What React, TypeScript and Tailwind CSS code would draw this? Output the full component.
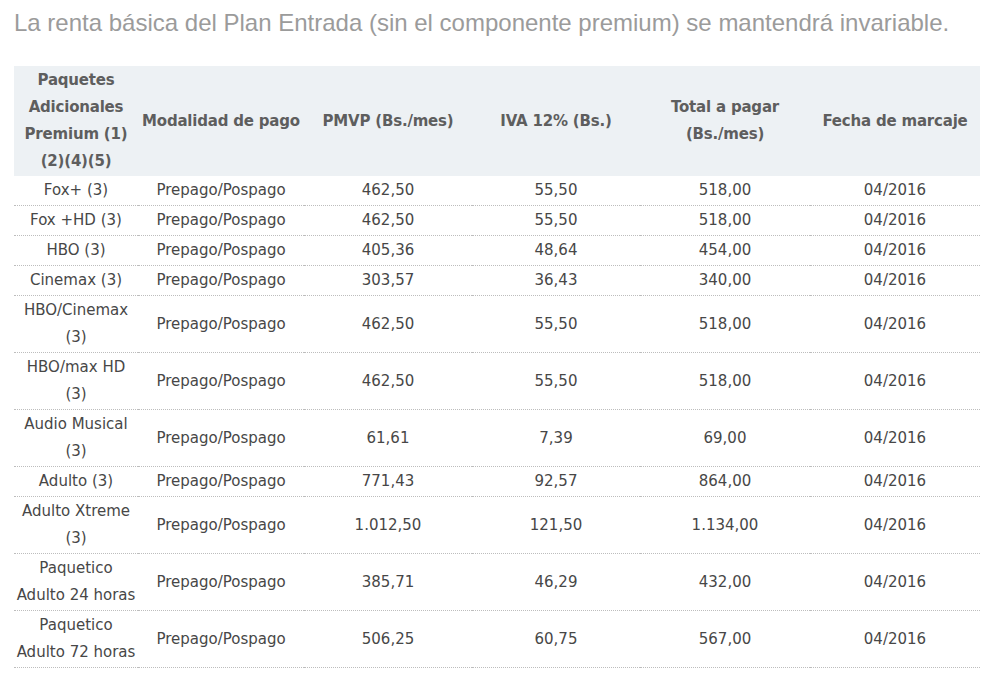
import React from 'react';

type Row = {
  name: React.ReactNode;
  pmvp: string;
  iva: string;
  total: string;
};

const rows: Row[] = [
  { name: 'Fox+ (3)', pmvp: '462,50', iva: '55,50', total: '518,00' },
  { name: 'Fox +HD (3)', pmvp: '462,50', iva: '55,50', total: '518,00' },
  { name: 'HBO (3)', pmvp: '405,36', iva: '48,64', total: '454,00' },
  { name: 'Cinemax (3)', pmvp: '303,57', iva: '36,43', total: '340,00' },
  { name: <>HBO/Cinemax<br />(3)</>, pmvp: '462,50', iva: '55,50', total: '518,00' },
  { name: <>HBO/max HD<br />(3)</>, pmvp: '462,50', iva: '55,50', total: '518,00' },
  { name: <>Audio Musical<br />(3)</>, pmvp: '61,61', iva: '7,39', total: '69,00' },
  { name: 'Adulto (3)', pmvp: '771,43', iva: '92,57', total: '864,00' },
  { name: <>Adulto Xtreme<br />(3)</>, pmvp: '1.012,50', iva: '121,50', total: '1.134,00' },
  { name: <>Paquetico<br />Adulto 24 horas</>, pmvp: '385,71', iva: '46,29', total: '432,00' },
  { name: <>Paquetico<br />Adulto 72 horas</>, pmvp: '506,25', iva: '60,75', total: '567,00' }
];

const App: React.FC = () => {
  const cell = 'px-0 py-px text-center align-middle border-b border-dotted border-[#bdbdbd]';

  return (
    <div className="min-h-screen bg-white px-[14px] pt-[6px]">
      <p
        className="text-[24px] leading-[34px] text-[#9b9b9b]"
        style={{ fontFamily: '"Liberation Sans", Arial, sans-serif' }}
      >
        La renta básica del Plan Entrada (sin el componente premium) se mantendrá invariable.
      </p>

      <table
        className="mt-[26px] w-[966px] table-fixed border-collapse text-[15px] leading-[27px] text-[#474747]"
        style={{ fontFamily: '"DejaVu Sans", Verdana, sans-serif' }}
      >
        <colgroup>
          <col className="w-[124px]" />
          <col className="w-[166px]" />
          <col className="w-[168px]" />
          <col className="w-[168px]" />
          <col className="w-[170px]" />
          <col className="w-[170px]" />
        </colgroup>
        <thead>
          <tr className="bg-[#edf1f4] text-[#5e5e5e] font-bold tracking-[-0.2px]">
            <th className="py-px text-center align-middle">
              Paquetes<br />Adicionales<br />Premium (1)<br />(2)(4)(5)
            </th>
            <th className="py-px text-center align-middle whitespace-nowrap">Modalidad de pago</th>
            <th className="py-px text-center align-middle">PMVP (Bs./mes)</th>
            <th className="py-px text-center align-middle">IVA 12% (Bs.)</th>
            <th className="py-px text-center align-middle">
              Total a pagar<br />(Bs./mes)
            </th>
            <th className="py-px text-center align-middle whitespace-nowrap">Fecha de marcaje</th>
          </tr>
        </thead>
        <tbody>
          {rows.map((row, i) => (
            <tr key={i}>
              <td className={cell}>{row.name}</td>
              <td className={cell}>Prepago/Pospago</td>
              <td className={cell}>{row.pmvp}</td>
              <td className={cell}>{row.iva}</td>
              <td className={cell}>{row.total}</td>
              <td className={cell}>04/2016</td>
            </tr>
          ))}
        </tbody>
      </table>
    </div>
  );
};

export default App;
